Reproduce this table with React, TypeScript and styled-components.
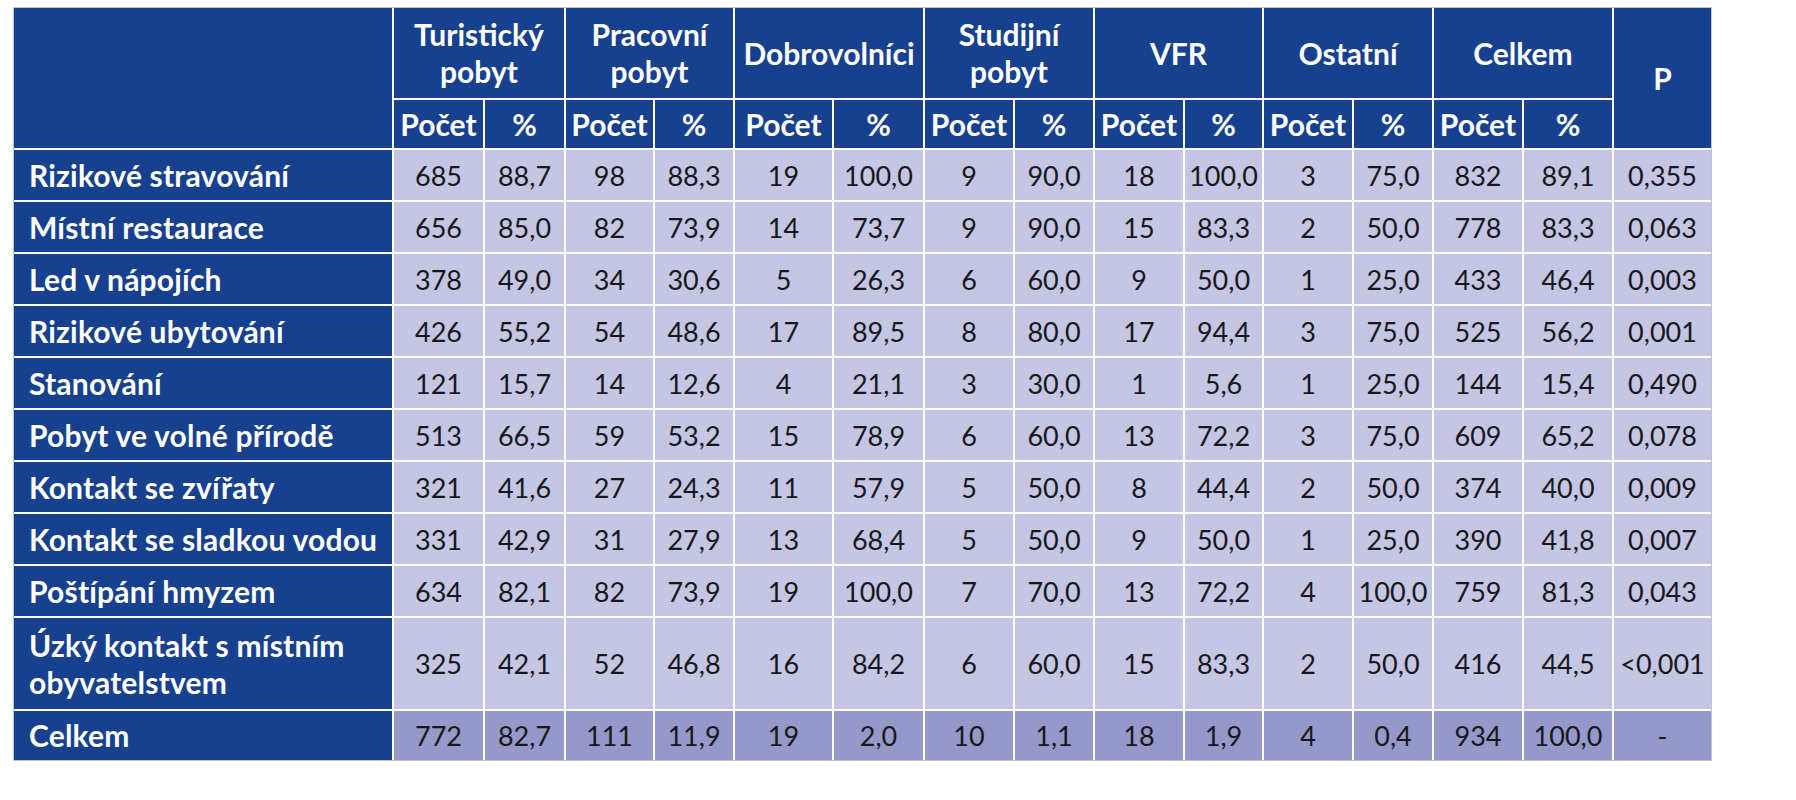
import React from "react";
import styled, { createGlobalStyle } from "styled-components";

const GlobalStyle = createGlobalStyle`
  html, body {
    margin: 0;
    padding: 0;
    background: #ffffff;
  }
  body {
    font-family: "Lato", "Liberation Sans", sans-serif;
  }
`;

const BLUE = "#17408f";
const LIGHT = "#c4c6e3";
const TOTAL = "#9598c8";

const Page = styled.div`
  padding: 7px 0 0 13px;
  width: 1796px;
  height: 800px;
  box-sizing: border-box;
`;

const Table = styled.div`
  display: grid;
  width: fit-content;
  grid-template-columns:
    378px 89px 79px 87px 78px 97px 89px 88px 78px 88px 77px 88px 78px 88px 88px 97px;
  grid-template-rows: 90px 48px repeat(9, 50px) 91px 49px;
  gap: 2px;
  background: #ffffff;
  border: 1px solid #bcc3dc;
`;

const HeadCell = styled.div`
  background: ${BLUE};
  color: #ffffff;
  font-family: "Lato", "Liberation Sans", sans-serif;
  font-weight: 700;
  font-size: 30px;
  line-height: 37px;
  display: flex;
  align-items: center;
  justify-content: center;
  text-align: center;
`;

const Corner = styled(HeadCell)`
  grid-column: 1;
  grid-row: 1 / span 2;
`;

const GroupHeader = styled(HeadCell)`
  grid-column: span 2;
  grid-row: 1;
`;

const PHeader = styled(HeadCell)`
  grid-column: 16;
  grid-row: 1 / span 2;
`;

const SubHeader = styled(HeadCell)`
  grid-row: 2;
`;

const RowLabel = styled(HeadCell)`
  justify-content: flex-start;
  text-align: left;
  padding-left: 15px;
  letter-spacing: 0.2px;
`;

const ValueCell = styled.div<{ $total?: boolean }>`
  background: ${(p) => (p.$total ? TOTAL : LIGHT)};
  color: #18181c;
  font-family: "Lato", "Liberation Sans", sans-serif;
  font-weight: 400;
  font-size: 27px;
  display: flex;
  align-items: center;
  justify-content: center;
`;

const groups: React.ReactNode[] = [
  <>Turistický<br />pobyt</>,
  <>Pracovní<br />pobyt</>,
  "Dobrovolníci",
  <>Studijní<br />pobyt</>,
  "VFR",
  "Ostatní",
  "Celkem",
];

type DataRow = { label: React.ReactNode; values: (string | number)[]; total?: boolean };

const rows: DataRow[] = [
  { label: "Rizikové stravování", values: [685, "88,7", 98, "88,3", 19, "100,0", 9, "90,0", 18, "100,0", 3, "75,0", 832, "89,1", "0,355"] },
  { label: "Místní restaurace", values: [656, "85,0", 82, "73,9", 14, "73,7", 9, "90,0", 15, "83,3", 2, "50,0", 778, "83,3", "0,063"] },
  { label: "Led v nápojích", values: [378, "49,0", 34, "30,6", 5, "26,3", 6, "60,0", 9, "50,0", 1, "25,0", 433, "46,4", "0,003"] },
  { label: "Rizikové ubytování", values: [426, "55,2", 54, "48,6", 17, "89,5", 8, "80,0", 17, "94,4", 3, "75,0", 525, "56,2", "0,001"] },
  { label: "Stanování", values: [121, "15,7", 14, "12,6", 4, "21,1", 3, "30,0", 1, "5,6", 1, "25,0", 144, "15,4", "0,490"] },
  { label: "Pobyt ve volné přírodě", values: [513, "66,5", 59, "53,2", 15, "78,9", 6, "60,0", 13, "72,2", 3, "75,0", 609, "65,2", "0,078"] },
  { label: "Kontakt se zvířaty", values: [321, "41,6", 27, "24,3", 11, "57,9", 5, "50,0", 8, "44,4", 2, "50,0", 374, "40,0", "0,009"] },
  { label: "Kontakt se sladkou vodou", values: [331, "42,9", 31, "27,9", 13, "68,4", 5, "50,0", 9, "50,0", 1, "25,0", 390, "41,8", "0,007"] },
  { label: "Poštípání hmyzem", values: [634, "82,1", 82, "73,9", 19, "100,0", 7, "70,0", 13, "72,2", 4, "100,0", 759, "81,3", "0,043"] },
  { label: <>Úzký kontakt s místním<br />obyvatelstvem</>, values: [325, "42,1", 52, "46,8", 16, "84,2", 6, "60,0", 15, "83,3", 2, "50,0", 416, "44,5", "<0,001"] },
  { label: "Celkem", total: true, values: [772, "82,7", 111, "11,9", 19, "2,0", 10, "1,1", 18, "1,9", 4, "0,4", 934, "100,0", "-"] },
];

export default function App() {
  return (
    <>
      <GlobalStyle />
      <Page>
        <Table>
          <Corner />
          {groups.map((g, i) => (
            <GroupHeader key={`g${i}`}>{g}</GroupHeader>
          ))}
          <PHeader>P</PHeader>
          {groups.map((_, i) => (
            <React.Fragment key={`s${i}`}>
              <SubHeader>Počet</SubHeader>
              <SubHeader>%</SubHeader>
            </React.Fragment>
          ))}
          {rows.map((r, ri) => (
            <React.Fragment key={`r${ri}`}>
              <RowLabel>{r.label}</RowLabel>
              {r.values.map((v, vi) => (
                <ValueCell key={vi} $total={r.total}>
                  {v}
                </ValueCell>
              ))}
            </React.Fragment>
          ))}
        </Table>
      </Page>
    </>
  );
}
